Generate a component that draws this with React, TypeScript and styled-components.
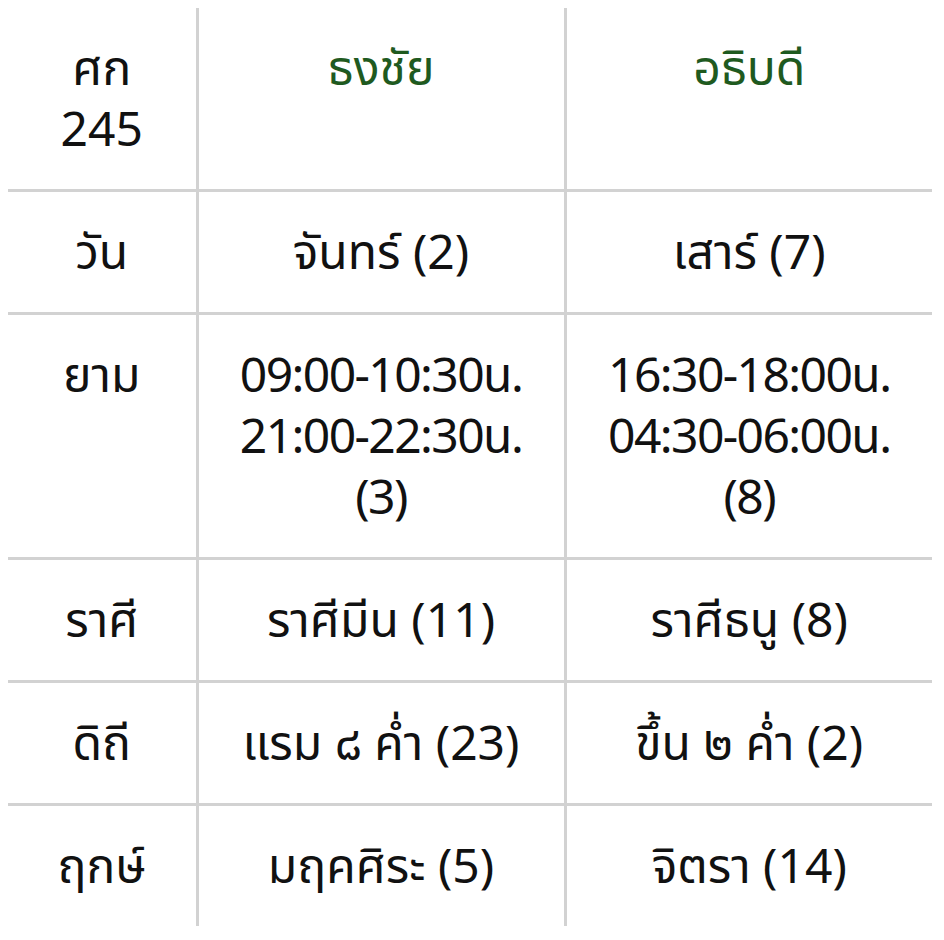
import styled, { createGlobalStyle } from 'styled-components';

const GlobalStyle = createGlobalStyle`
  body {
    margin: 8px;
    background: #ffffff;
    font-family: "Noto Sans Thai", "Noto Sans", "DejaVu Sans", sans-serif;
  }
`;

const Table = styled.table`
  width: 924px;
  border-collapse: collapse;
  table-layout: fixed;
`;

const Row = styled.tr`
  border-bottom: 3px solid #d2d2d2;

  &:last-child {
    border-bottom: none;
  }
`;

const Cell = styled.td<{ $head?: boolean; $tight?: boolean }>`
  padding: 32px 8px 27px;
  vertical-align: top;
  text-align: center;
  font-size: 48px;
  line-height: 61px;
  font-weight: 400;
  letter-spacing: ${(p) => (p.$tight ? '-1.6px' : 'normal')};
  color: ${(p) => (p.$head ? '#1f5a1f' : '#111111')};
  border-right: 3px solid #d2d2d2;

  &:last-child {
    border-right: none;
  }
`;

const rows: string[][] = [
  ['วัน', 'จันทร์ (2)', 'เสาร์ (7)'],
  [
    'ยาม',
    '09:00-10:30น.\n21:00-22:30น.\n(3)',
    '16:30-18:00น.\n04:30-06:00น.\n(8)',
  ],
  ['ราศี', 'ราศีมีน (11)', 'ราศีธนู (8)'],
  ['ดิถี', 'แรม ๘ ค่ำ (23)', 'ขึ้น ๒ ค่ำ (2)'],
  ['ฤกษ์', 'มฤคศิระ (5)', 'จิตรา (14)'],
];

function Lines({ text }: { text: string }) {
  const parts = text.split('\n');
  return (
    <>
      {parts.map((t, i) => (
        <div key={i}>{t}</div>
      ))}
    </>
  );
}

export default function App() {
  return (
    <>
      <GlobalStyle />
      <Table>
        <colgroup>
          <col style={{ width: 189 }} />
          <col style={{ width: 368 }} />
          <col />
        </colgroup>
        <tbody>
          <Row>
            <Cell>
              <Lines text={'ศก\n245'} />
            </Cell>
            <Cell $head>ธงชัย</Cell>
            <Cell $head>อธิบดี</Cell>
          </Row>
          {rows.map((r) => (
            <Row key={r[0]}>
              {r.map((c, i) => (
                <Cell key={i} $tight={c.includes(':')}>
                  <Lines text={c} />
                </Cell>
              ))}
            </Row>
          ))}
        </tbody>
      </Table>
    </>
  );
}
